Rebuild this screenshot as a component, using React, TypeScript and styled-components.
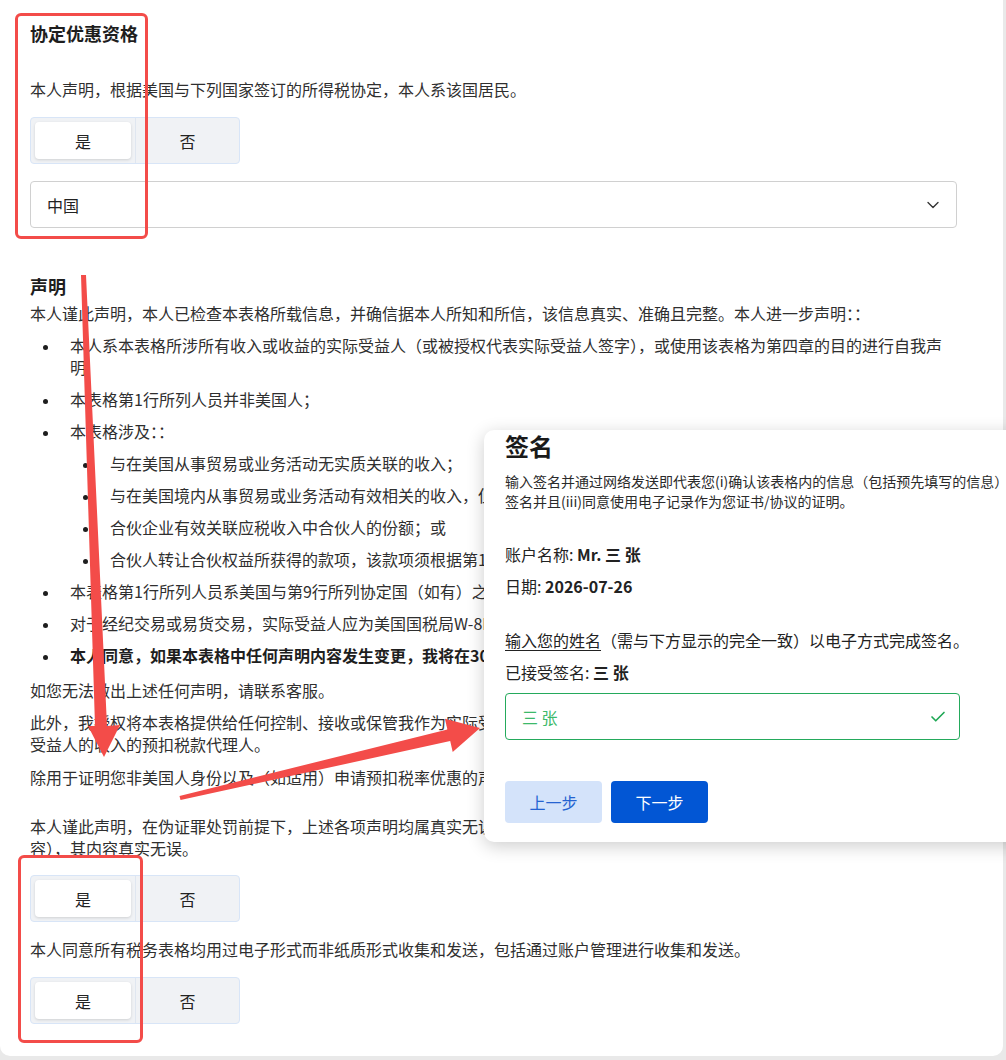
import React from "react";
import styled, { createGlobalStyle } from "styled-components";
import { ChevronDown, Check } from "lucide-react";

const Global = createGlobalStyle`
  html, body { margin: 0; padding: 0; overflow: hidden; }
  body { font-family: "Noto Sans CJK SC", "Noto Sans", sans-serif; color: #2f2f2f; }
  * { box-sizing: border-box; }
`;

const Page = styled.div`
  position: relative;
  width: 1006px;
  height: 1060px;
  overflow: hidden;
  background: #e9e9e9;
`;

const Card = styled.main`
  width: 1003px;
  background: #ffffff;
  border-radius: 0 0 10px 10px;
  padding: 20px 46px 32px 30px;
  font-size: 16px;
  line-height: 22px;
`;

const Title = styled.h2`
  margin: 0;
  font-size: 18px;
  line-height: 26px;
  font-weight: 600;
  color: #1e1e1e;
`;

const Heading = styled.h3<{ $mt: number }>`
  margin: ${(p) => p.$mt}px 0 0;
  font-size: 18px;
  line-height: 24px;
  font-weight: 700;
  color: #1e1e1e;
`;

const Text = styled.p<{ $mt: number }>`
  margin: ${(p) => p.$mt}px 0 0;
  font-size: 16px;
  line-height: 22px;
`;

const Segmented = styled.div<{ $mt: number }>`
  margin-top: ${(p) => p.$mt}px;
  display: grid;
  grid-template-columns: 105px 103px;
  width: 210px;
  height: 47px;
  border: 1px solid #d8e5f7;
  border-radius: 4px;
  background: #f0f2f5;
`;

const SegCell = styled.div<{ $divider: boolean }>`
  padding: 4px ${(p) => (p.$divider ? "4px" : "0")} 4px ${(p) => (p.$divider ? "4px" : "0")};
  border-right: ${(p) => (p.$divider ? "1px solid #dfe6f0" : "none")};
`;

const SegPill = styled.div<{ $active: boolean }>`
  height: 100%;
  display: flex;
  align-items: center;
  justify-content: center;
  font-size: 16px;
  color: #222;
  border-radius: 4px;
  background: ${(p) => (p.$active ? "#ffffff" : "transparent")};
  box-shadow: ${(p) => (p.$active ? "0 1px 3px rgba(0,0,0,0.14)" : "none")};
`;

const Select = styled.div`
  margin-top: 17px;
  height: 47px;
  border: 1px solid #d0d0d0;
  border-radius: 4px;
  padding: 0 13px 0 16px;
  display: flex;
  align-items: center;
  justify-content: space-between;
  font-size: 16px;
  color: #222;
`;

const List = styled.ul<{ $mt: number }>`
  margin: ${(p) => p.$mt}px 0 0;
  padding: 0 0 0 40px;
  list-style: none;
`;

const Item = styled.li<{ $bold?: boolean }>`
  font-weight: ${(p) => (p.$bold ? 700 : 400)};
  color: ${(p) => (p.$bold ? "#1e1e1e" : "#2f2f2f")};
  & + & { margin-top: 10px; }
  &::before {
    content: "";
    display: inline-block;
    width: 5px;
    height: 5px;
    border-radius: 50%;
    background: #1e1e1e;
    margin-left: -27px;
    margin-right: 22px;
    vertical-align: middle;
  }
`;

const Popup = styled.section`
  position: absolute;
  left: 484px;
  top: 430px;
  width: 700px;
  height: 412px;
  background: #ffffff;
  border-radius: 10px;
  box-shadow: 0 4px 18px rgba(0, 0, 0, 0.2);
  padding: 1px 21px 0;
  color: #222;
`;

const PopTitle = styled.h2`
  margin: 0;
  font-size: 24px;
  line-height: 30px;
  font-weight: 700;
  color: #1a1a1a;
`;

const PopDesc = styled.p`
  margin: 10px 0 0;
  font-size: 14px;
  line-height: 20px;
  white-space: nowrap;
  color: #2a2a2a;
`;

const Field = styled.div<{ $mt: number }>`
  margin-top: ${(p) => p.$mt}px;
  font-size: 16px;
  line-height: 24px;
  white-space: nowrap;
  b { font-weight: 600; }
`;

const Underlined = styled.span`
  text-decoration: underline;
  text-underline-offset: 3px;
`;

const SignInput = styled.div`
  margin-top: 9px;
  width: 455px;
  height: 47px;
  border: 1px solid #24aa5c;
  border-radius: 4px;
  padding: 0 12px 0 16px;
  display: flex;
  align-items: center;
  justify-content: space-between;
  font-size: 16px;
  color: #3cb96a;
`;

const Actions = styled.div`
  margin-top: 41px;
  display: flex;
  gap: 9px;
`;

const Btn = styled.button<{ $primary?: boolean }>`
  width: 97px;
  height: 42px;
  border: none;
  border-radius: 4px;
  font-family: inherit;
  font-size: 16px;
  background: ${(p) => (p.$primary ? "#0256d4" : "#d4e3fa")};
  color: ${(p) => (p.$primary ? "#ffffff" : "#2563d1")};
`;

const Marker = styled.div<{ $x: number; $y: number; $w: number; $h: number }>`
  position: absolute;
  left: ${(p) => p.$x}px;
  top: ${(p) => p.$y}px;
  width: ${(p) => p.$w}px;
  height: ${(p) => p.$h}px;
  border: 3px solid #f34c49;
  border-radius: 6px;
  pointer-events: none;
`;

const ArrowLayer = styled.svg`
  position: absolute;
  left: 0;
  top: 0;
  pointer-events: none;
`;

function YesNo({ mt }: { mt: number }) {
  return (
    <Segmented $mt={mt}>
      <SegCell $divider>
        <SegPill $active>是</SegPill>
      </SegCell>
      <SegCell $divider={false}>
        <SegPill $active={false}>否</SegPill>
      </SegCell>
    </Segmented>
  );
}

export default function App() {
  return (
    <Page>
      <Global />
      <Card>
        <Title>协定优惠资格</Title>
        <Text $mt={32}>本人声明，根据美国与下列国家签订的所得税协定，本人系该国居民。</Text>
        <YesNo mt={17} />
        <Select>
          <span>中国</span>
          <ChevronDown size={20} strokeWidth={1.6} color="#333" />
        </Select>

        <Heading $mt={46}>声明</Heading>
        <Text $mt={4}>
          本人谨此声明，本人已检查本表格所载信息，并确信据本人所知和所信，该信息真实、准确且完整。本人进一步声明：：
        </Text>
        <List $mt={10}>
          <Item>
            本人系本表格所涉所有收入或收益的实际受益人（或被授权代表实际受益人签字），或使用该表格为第四章的目的进行自我声明
          </Item>
          <Item>本表格第1行所列人员并非美国人；</Item>
          <Item>
            本表格涉及：：
            <List $mt={10}>
              <Item>与在美国从事贸易或业务活动无实质关联的收入；</Item>
              <Item>与在美国境内从事贸易或业务活动有效相关的收入，但未根据适用的所得税协定缴纳税款；</Item>
              <Item>合伙企业有效关联应税收入中合伙人的份额；或</Item>
              <Item>合伙人转让合伙权益所获得的款项，该款项须根据第1446(f)条规定预扣税款；</Item>
            </List>
          </Item>
          <Item>本表格第1行所列人员系美国与第9行所列协定国（如有）之间所得税协定意义上的该国居民；</Item>
          <Item>对于经纪交易或易货交易，实际受益人应为美国国税局W-8BEN表格说明中所定义的豁免外国人。</Item>
          <Item $bold>本人同意，如果本表格中任何声明内容发生变更，我将在30天内提交新的表格。</Item>
        </List>
        <Text $mt={13}>如您无法做出上述任何声明，请联系客服。</Text>
        <Text $mt={10}>
          此外，我授权将本表格提供给任何控制、接收或保管我作为实际受益人的收入的预扣税款代理人，或任何可支付或划拨我作为实际受益人的收入的预扣税款代理人。
        </Text>
        <Text $mt={11}>
          除用于证明您非美国人身份以及（如适用）申请预扣税率优惠的声明外，美国国税局不要求您同意本文件的任何条款。
        </Text>
        <Text $mt={27}>
          本人谨此声明，在伪证罪处罚前提下，上述各项声明均属真实无误，且本人已仔细审阅本表格所载的全部信息（包括预先填写的内容），其内容真实无误。
        </Text>
        <YesNo mt={16} />
        <Text $mt={16}>本人同意所有税务表格均用过电子形式而非纸质形式收集和发送，包括通过账户管理进行收集和发送。</Text>
        <YesNo mt={17} />
      </Card>

      <Popup>
        <PopTitle>签名</PopTitle>
        <PopDesc>
          输入签名并通过网络发送即代表您(i)确认该表格内的信息（包括预先填写的信息）真实准确，(ii)以电子方式
          <br />
          签名并且(iii)同意使用电子记录作为您证书/协议的证明。
        </PopDesc>
        <Field $mt={31}>
          账户名称: <b>Mr. 三 张</b>
        </Field>
        <Field $mt={8}>
          日期: <b>2026-07-26</b>
        </Field>
        <Field $mt={30}>
          <Underlined>输入您的姓名</Underlined>（需与下方显示的完全一致）以电子方式完成签名。
        </Field>
        <Field $mt={8}>
          已接受签名: <b>三 张</b>
        </Field>
        <SignInput>
          <span>三 张</span>
          <Check size={18} strokeWidth={2.2} color="#1fa855" />
        </SignInput>
        <Actions>
          <Btn>上一步</Btn>
          <Btn $primary>下一步</Btn>
        </Actions>
      </Popup>

      <Marker $x={15} $y={13} $w={133} $h={226} />
      <Marker $x={18} $y={855} $w={125} $h={188} />

      <ArrowLayer width={1006} height={1060} viewBox="0 0 1006 1060">
        <polygon
          fill="#f34c49"
          points="81,275 86,275 107,726 120,725 104,757 88,726 95,726"
        />
        <polygon
          fill="#f34c49"
          points="179.5,796 447.4,729.5 444.9,718.7 480,728 452.7,752 450.2,741.1 180.5,800"
        />
      </ArrowLayer>
    </Page>
  );
}
